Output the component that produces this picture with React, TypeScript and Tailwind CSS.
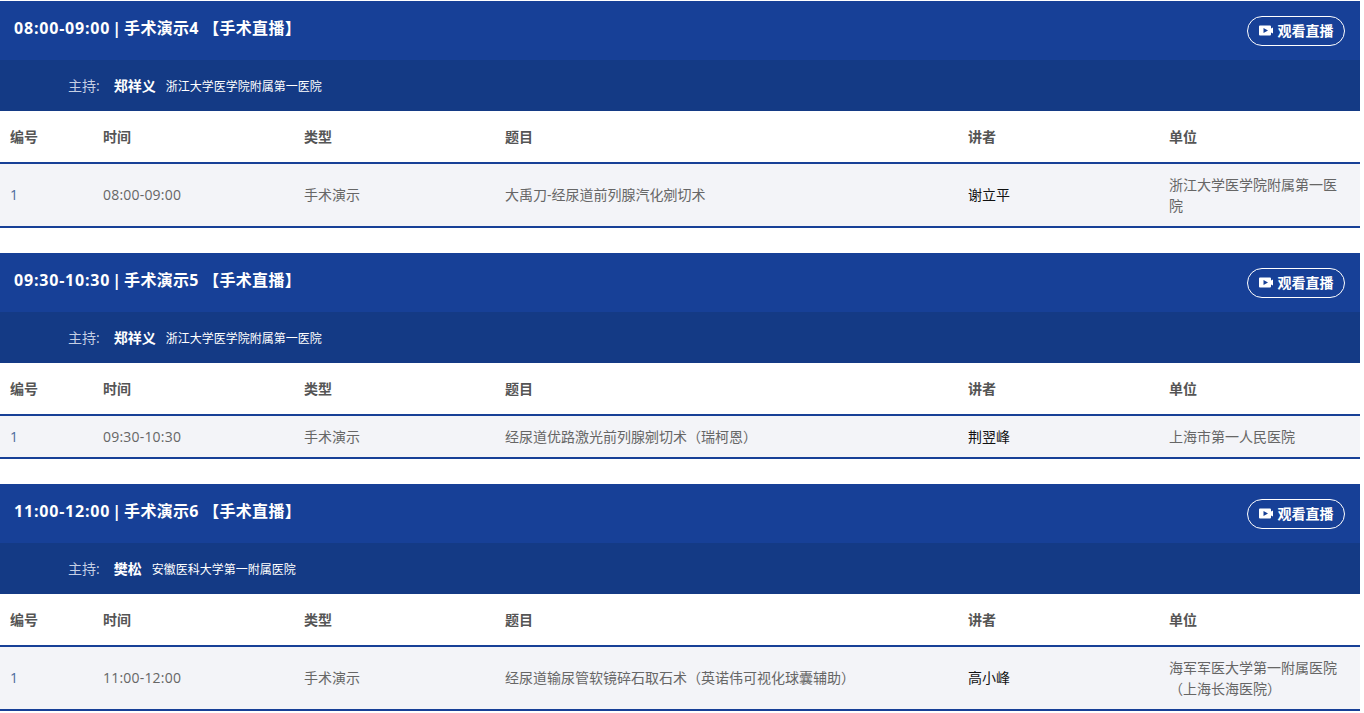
const FONT = "font-['Open_Sans','Noto_Sans_CJK_SC',sans-serif]";

type Session = {
  label: string;
  host: string;
  hostOrg: string;
  time: string;
  topic: string;
  speaker: string;
  org: string[];
};

const sessions: Session[] = [
  {
    label: "手术演示4 【手术直播】",
    host: "郑祥义",
    hostOrg: "浙江大学医学院附属第一医院",
    time: "08:00-09:00",
    topic: "大禹刀-经尿道前列腺汽化剜切术",
    speaker: "谢立平",
    org: ["浙江大学医学院附属第一医", "院"],
  },
  {
    label: "手术演示5 【手术直播】",
    host: "郑祥义",
    hostOrg: "浙江大学医学院附属第一医院",
    time: "09:30-10:30",
    topic: "经尿道优路激光前列腺剜切术（瑞柯恩）",
    speaker: "荆翌峰",
    org: ["上海市第一人民医院"],
  },
  {
    label: "手术演示6 【手术直播】",
    host: "樊松",
    hostOrg: "安徽医科大学第一附属医院",
    time: "11:00-12:00",
    topic: "经尿道输尿管软镜碎石取石术（英诺伟可视化球囊辅助）",
    speaker: "高小峰",
    org: ["海军军医大学第一附属医院", "（上海长海医院）"],
  },
];

const headers = ["编号", "时间", "类型", "题目", "讲者", "单位"];
const GRID = "grid grid-cols-[93px_201px_201px_463px_201px_201px]";

function SessionBlock({ s }: { s: Session }) {
  // single-line cells sit lower when the unit wraps onto two lines
  const cell = s.org.length > 1 ? "pl-[10px] pt-[10px]" : "pl-[10px]";

  return (
    <section className="mb-[25px]">
      <div className="flex h-[59px] items-start justify-between bg-[#174097] pl-[14px] pr-[15px]">
        <h2 className="pt-[14px] text-[16px] leading-[26px] font-bold text-white">
          <span className="tracking-[0.8px]">{s.time}</span>
          <span className="ml-[2px] mr-[3px]">|</span>
          <span className="tracking-[0.3px]">{s.label}</span>
        </h2>
        <a className="mt-[15px] flex h-[30px] w-[98px] items-center justify-center gap-[5px] rounded-full border border-white pb-[1px] text-[14px] font-bold text-white">
          <svg width="14" height="11" viewBox="0 0 14 11" fill="white">
            <path fillRule="evenodd" d="M1 0.5H11a1 1 0 0 1 1 1V3.500L14 2.500v6L12 7.500v2a1 1 0 0 1-1 1H1a1 1 0 0 1-1-1V1.500a1 1 0 0 1 1-1ZM4.500 3v5l4.500-2.500Z" />
          </svg>
          观看直播
        </a>
      </div>
      <div className="flex h-[51px] items-center bg-[#143a85] pl-[68px] pt-[2px]">
        <span className="mr-[14px] mb-[2px] text-[14px] leading-[20px] text-[#c5cfe4]">主持:</span>
        <span className="mr-[10px] mb-[2px] text-[14px] leading-[20px] font-bold text-white">{s.host}</span>
        <span className="text-[12px] leading-[20px] text-white">{s.hostOrg}</span>
      </div>
      <div className={`${GRID} h-[53px] items-start border-b-2 border-[#174097] bg-white pt-[16px] text-[14px] leading-[20px] font-bold text-[#555]`}>
        {headers.map((h) => (
          <div key={h} className="pl-[10px]">{h}</div>
        ))}
      </div>
      <div className={`${GRID} items-start border-b-2 border-[#174097] bg-[#f3f4f8] py-[10px] text-[14px] leading-[21px] text-[#666]`}>
        <div className={`${cell} text-[#4a6a9c]`}>1</div>
        <div className={`${cell} tracking-[0.2px]`}>{s.time}</div>
        <div className={cell}>手术演示</div>
        <div className={cell}>{s.topic}</div>
        <div className={`${cell} text-[#111]`}>{s.speaker}</div>
        <div className="pl-[10px]">
          {s.org.map((line) => (
            <div key={line}>{line}</div>
          ))}
        </div>
      </div>
    </section>
  );
}

export default function App() {
  return (
    <div className={`${FONT} h-[713px] w-[1360px] overflow-hidden bg-white pt-px`}>
      {sessions.map((s) => (
        <SessionBlock key={s.time} s={s} />
      ))}
    </div>
  );
}
